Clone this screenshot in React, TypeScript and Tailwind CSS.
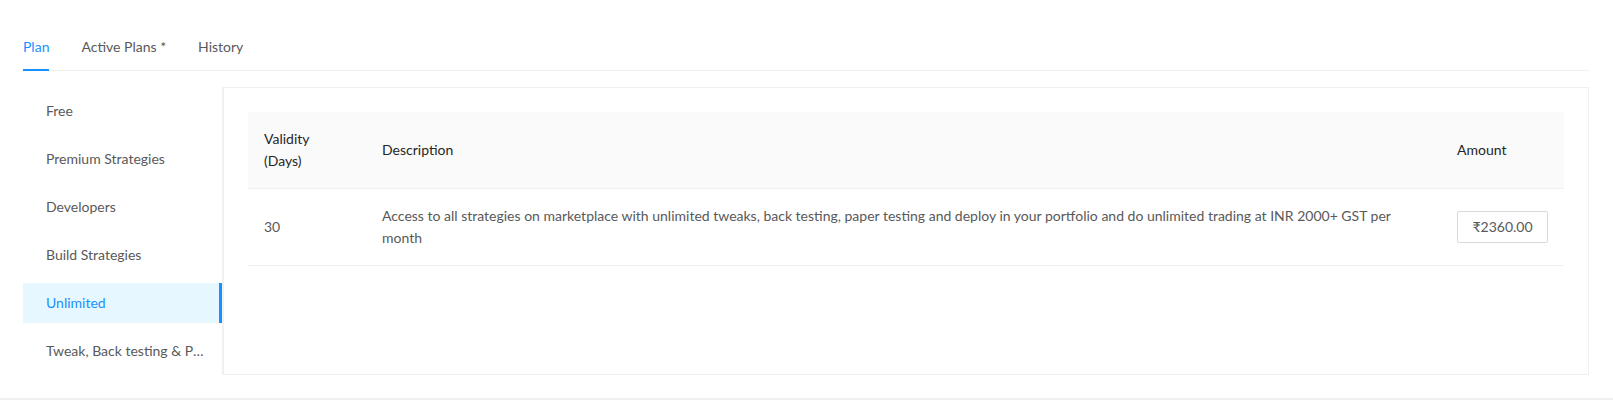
import React from "react";

const menu = [
  "Free",
  "Premium Strategies",
  "Developers",
  "Build Strategies",
  "Unlimited",
  "Tweak, Back testing & Paper testing",
];

export default function App() {
  return (
    <div
      className="w-[1613px] h-[400px] bg-white text-[14px] leading-[22px] text-[#262626] border-b-2 border-[#f0f0f0] box-border"
      style={{ fontFamily: "Lato, 'Noto Sans', sans-serif" }}
    >
      <div className="pl-[23px] pr-[24px] pt-[24px]">
        {/* Tabs */}
        <div className="flex gap-[32px] border-b border-[#f0f0f0] mb-[16px]">
          <div className="relative py-[12px] text-[#1890ff]">
            Plan
            <div className="absolute left-0 right-0 bottom-[-1px] h-[2px] bg-[#1890ff]" />
          </div>
          <div className="py-[12px] text-[#595959]">Active Plans *</div>
          <div className="py-[12px] text-[#595959]">History</div>
        </div>

        <div className="flex">
          {/* Side menu */}
          <div className="w-[200px] shrink-0 border-r border-[#f0f0f0] flex flex-col">
            {menu.map((m) => {
              const active = m === "Unlimited";
              return (
                <div
                  key={m}
                  className={
                    active
                      ? "relative my-[4px] h-[40px] leading-[40px] pl-[23px] pr-[16px] bg-[#e6f7ff] text-[#1890ff] truncate"
                      : "relative my-[4px] h-[40px] leading-[40px] pl-[23px] pr-[16px] text-[#595959] truncate"
                  }
                >
                  {m}
                  {active && (
                    <div className="absolute right-0 top-0 bottom-0 w-[3px] bg-[#1890ff]" />
                  )}
                </div>
              );
            })}
          </div>

          {/* Content */}
          <div className="flex-1 border border-[#f0f0f0] p-[24px]">
            <table className="w-full table-fixed border-collapse">
              <colgroup>
                <col className="w-[118px]" />
                <col />
                <col className="w-[123px]" />
              </colgroup>
              <thead>
                <tr className="bg-[#fafafa] text-[#262626]">
                  <th className="text-left font-normal p-[16px] border-b border-[#f0f0f0]">
                    Validity (Days)
                  </th>
                  <th className="text-left font-normal p-[16px] border-b border-[#f0f0f0]">
                    Description
                  </th>
                  <th className="text-left font-normal p-[16px] border-b border-[#f0f0f0]">
                    Amount
                  </th>
                </tr>
              </thead>
              <tbody className="text-[#595959]">
                <tr>
                  <td className="p-[16px] border-b border-[#f0f0f0] h-[77px]">30</td>
                  <td className="p-[16px] border-b border-[#f0f0f0]">
                    Access to all strategies on marketplace with unlimited tweaks, back
                    testing, paper testing and deploy in your portfolio and do unlimited
                    trading at INR 2000+ GST per month
                  </td>
                  <td className="p-[16px] border-b border-[#f0f0f0]">
                    <div className="w-[91px] h-[32px] border border-[#d9d9d9] rounded-[2px] flex items-center justify-center text-[#595959]">
                      ₹2360.00
                    </div>
                  </td>
                </tr>
              </tbody>
            </table>
          </div>
        </div>
      </div>
    </div>
  );
}
